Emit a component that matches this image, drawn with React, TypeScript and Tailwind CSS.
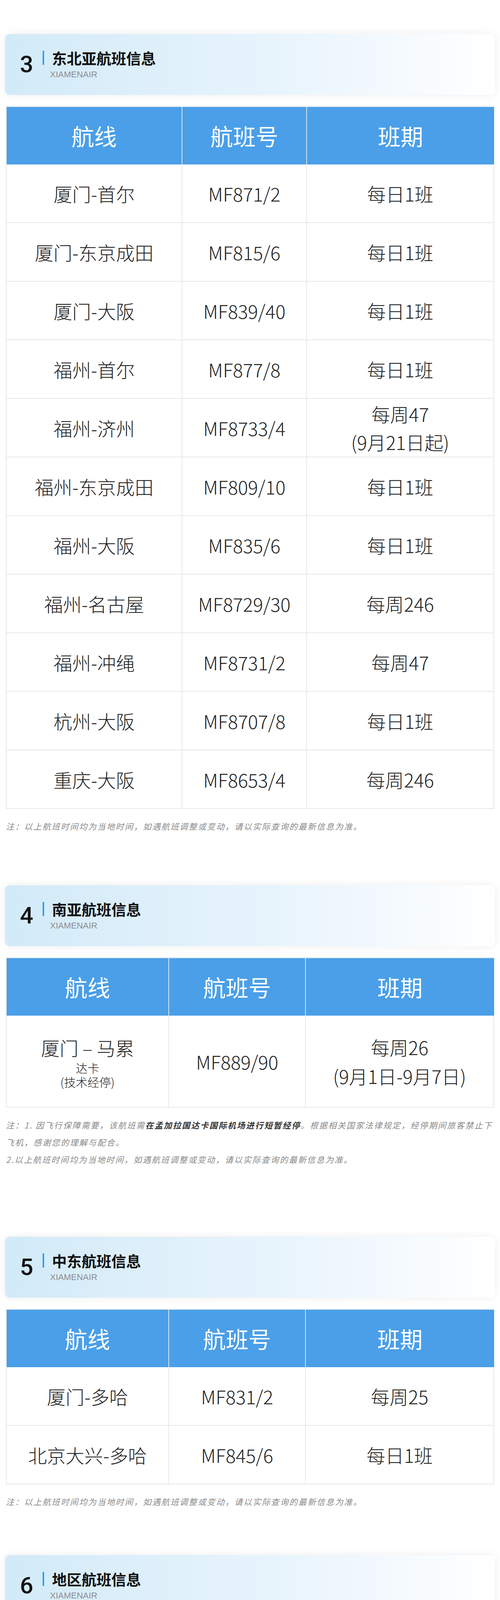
import type { ReactNode } from "react";

type Flight = {
  route: ReactNode;
  no: string;
  sched: ReactNode;
};

type Section = {
  num: string;
  title: string;
  cols: string;
  rowH: string;
  top: string;
  rows: Flight[];
  note: ReactNode;
};

const cjk = "font-['Noto_Sans_CJK_SC','Noto_Sans',sans-serif]";

const twoLines = (a: string, b: string) => (
  <div className="leading-[72px]">
    <div>{a}</div>
    <div>{b}</div>
  </div>
);

const simpleNote = "注：以上航班时间均为当地时间，如遇航班调整或变动，请以实际查询的最新信息为准。";

const sections: Section[] = [
  {
    num: "3",
    title: "东北亚航班信息",
    cols: "grid-cols-[450px_319px_1fr]",
    rowH: "h-[150px]",
    top: "mt-[87px]",
    rows: [
      { route: "厦门-首尔", no: "MF871/2", sched: "每日1班" },
      { route: "厦门-东京成田", no: "MF815/6", sched: "每日1班" },
      { route: "厦门-大阪", no: "MF839/40", sched: "每日1班" },
      { route: "福州-首尔", no: "MF877/8", sched: "每日1班" },
      { route: "福州-济州", no: "MF8733/4", sched: twoLines("每周47", "(9月21日起)") },
      { route: "福州-东京成田", no: "MF809/10", sched: "每日1班" },
      { route: "福州-大阪", no: "MF835/6", sched: "每日1班" },
      { route: "福州-名古屋", no: "MF8729/30", sched: "每周246" },
      { route: "福州-冲绳", no: "MF8731/2", sched: "每周47" },
      { route: "杭州-大阪", no: "MF8707/8", sched: "每日1班" },
      { route: "重庆-大阪", no: "MF8653/4", sched: "每周246" },
    ],
    note: <p>{simpleNote}</p>,
  },
  {
    num: "4",
    title: "南亚航班信息",
    cols: "grid-cols-[416px_350px_1fr]",
    rowH: "h-[236px]",
    top: "mt-[129px]",
    rows: [
      {
        route: (
          <div>
            <div className="text-[48px] leading-[68px]">厦门 – 马累</div>
            <div className="text-[30px] leading-[36px]">达卡</div>
            <div className="text-[30px] leading-[36px]">(技术经停)</div>
          </div>
        ),
        no: "MF889/90",
        sched: (
          <div className="leading-[74px]">
            <div>每周26</div>
            <div>(9月1日-9月7日)</div>
          </div>
        ),
      },
    ],
    note: (
      <>
        <p>
          注：1. 因飞行保障需要，该航班需
          <span className="font-bold text-[#333]">在孟加拉国达卡国际机场进行短暂经停</span>
          。根据相关国家法律规定，经停期间旅客禁止下
          <br />
          飞机，感谢您的理解与配合。
        </p>
        <p>2.以上航班时间均为当地时间，如遇航班调整或变动，请以实际查询的最新信息为准。</p>
      </>
    ),
  },
  {
    num: "5",
    title: "中东航班信息",
    cols: "grid-cols-[416px_350px_1fr]",
    rowH: "h-[150px]",
    top: "mt-[176px]",
    rows: [
      { route: "厦门-多哈", no: "MF831/2", sched: "每周25" },
      { route: "北京大兴-多哈", no: "MF845/6", sched: "每日1班" },
    ],
    note: <p>{simpleNote}</p>,
  },
  {
    num: "6",
    title: "地区航班信息",
    cols: "grid-cols-[488px_338px_1fr]",
    rowH: "h-[150px]",
    top: "mt-[115px]",
    rows: [
      { route: "厦门-中国台北桃园", no: "MF887/8", sched: "每日1班" },
      { route: "厦门-中国台北松山", no: "MF881/2", sched: "每日1班" },
      { route: "厦门-中国高雄", no: "MF8665/6", sched: "每周7" },
      { route: "厦门-中国澳门", no: "MF8681/2", sched: "每日1班" },
      { route: "福州-中国台北桃园", no: "MF879/80", sched: "每日1班" },
      { route: "福州-中国台北松山", no: "MF883/4", sched: "每周123467" },
      { route: "福州-中国高雄", no: "MF8679/80", sched: "每周5" },
      { route: "福州-中国香港", no: "MF8651/2", sched: "每周37" },
      { route: "福州-中国澳门", no: "MF8671/2", sched: "每周15" },
      { route: "杭州-中国台北桃园", no: "MF8689/90", sched: "每周5" },
      { route: "杭州-中国香港", no: "MF8655/6", sched: "每周246" },
      { route: "杭州-中国澳门", no: "MF8719/20", sched: "每日1班" },
      { route: "泉州-中国澳门", no: "MF8659/60", sched: "每周1357" },
    ],
    note: <p>{simpleNote}</p>,
  },
];

const SectionHead = ({ num, title }: { num: string; title: string }) => (
  <div className="h-[156px] rounded-[12px] bg-gradient-to-r from-[#d2eaf8] via-[#eaf5fd] via-60% to-white shadow-[0_0_22px_rgba(0,0,0,0.07)] flex items-center pl-[38px]">
    <span className="font-['Roboto','Liberation_Sans',sans-serif] font-medium text-[60px] leading-none text-[#111] w-[58px]">
      {num}
    </span>
    <div>
      <div className="flex items-center">
        <span className="w-[4px] h-[36px] bg-[#2ea3e0]" />
        <span className={`${cjk} ml-[20px] text-[38px] leading-[44px] font-bold text-[#111]`}>{title}</span>
      </div>
      <div className="ml-[19px] mt-[8px] font-['Liberation_Sans',Arial,sans-serif] text-[22px] leading-[26px] text-[#8c8c8c]">
        XIAMENAIR
      </div>
    </div>
  </div>
);

const FlightTable = ({ s }: { s: Section }) => {
  const cell = "flex items-center justify-center text-center border-r-2 border-b-2 border-[#e8e8e8]";
  return (
    <div className={`${cjk} mt-[29px] mx-[2px] border-l-2 border-[#e8e8e8]`}>
      <div className={`grid ${s.cols} h-[149px] bg-[#4a9fe8] border-t-2 border-[#d6e4f1] text-white text-[58px] font-normal`}>
        <div className="flex items-center justify-center border-r-2 border-[#d6e4f1]">航线</div>
        <div className="flex items-center justify-center border-r-2 border-[#d6e4f1]">航班号</div>
        <div className="flex items-center justify-center">班期</div>
      </div>
      {s.rows.map((r) => (
        <div key={r.no} className={`grid ${s.cols} ${s.rowH} text-[48px] font-light text-[#222]`}>
          <div className={cell}>{r.route}</div>
          <div className={cell}>{r.no}</div>
          <div className={cell}>{r.sched}</div>
        </div>
      ))}
    </div>
  );
};

export default function App() {
  return (
    <div className="w-[1280px] bg-white px-[13px] pb-[7px]">
      {sections.map((s) => (
        <section key={s.num} className={s.top}>
          <SectionHead num={s.num} title={s.title} />
          <FlightTable s={s} />
          <div className={`${cjk} mt-[22px] ml-[2px] italic text-[21px] leading-[44px] tracking-[2.4px] text-[#8a8a8a]`}>
            {s.note}
          </div>
        </section>
      ))}
    </div>
  );
}
